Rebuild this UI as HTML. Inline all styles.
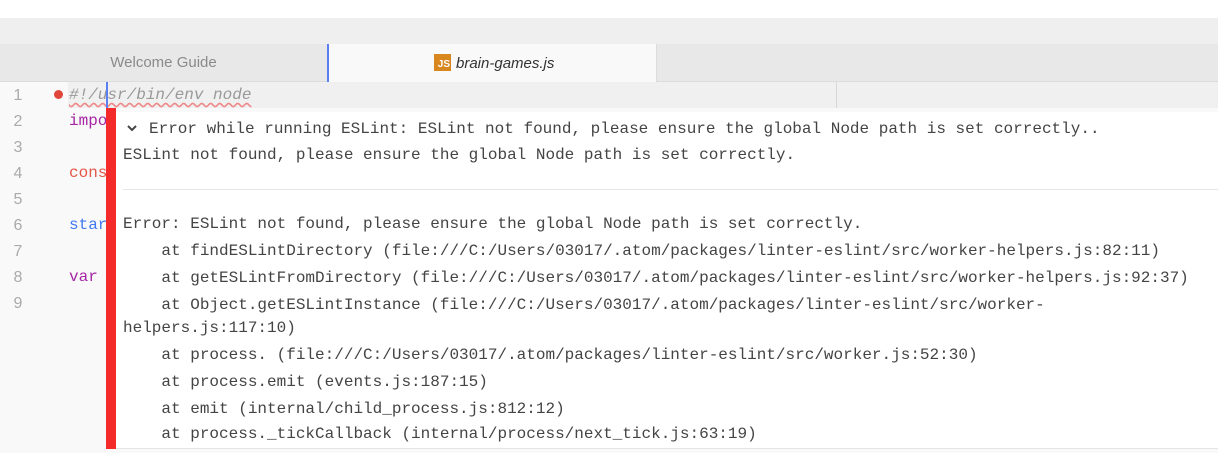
<!DOCTYPE html>
<html><head><meta charset="utf-8"><style>
*{margin:0;padding:0;box-sizing:border-box}
body{width:1218px;height:453px;overflow:hidden;background:#f9f9f9;position:relative;font-family:"Liberation Sans",sans-serif}
.abs{position:absolute}
.mono{font-family:"Liberation Mono",monospace;font-size:16px;white-space:pre}
.ln{position:absolute;left:0;width:36px;text-align:center;color:#aaa;font-size:16px;font-family:"Liberation Sans",sans-serif}
.p{position:absolute;left:123px;color:#444;font-family:"Liberation Mono",monospace;font-size:16px;white-space:pre;letter-spacing:0}
</style></head><body>
<div class="abs" style="left:0;top:0;width:1218px;height:18px;background:#fff"></div>
<div class="abs" style="left:0;top:18px;width:1218px;height:26px;background:#efefef"></div>
<div class="abs" style="left:0;top:44px;width:1218px;height:38px;background:#e8e8e8;border-bottom:1px solid #dcdcdc"></div>
<div class="abs" style="left:0;top:44px;width:327px;height:38px;color:#8a8a8a;font-size:15px;text-align:center;line-height:38px">Welcome Guide</div>
<div class="abs" style="left:327px;top:44px;width:2px;height:38px;background:#5a7ff0"></div>
<div class="abs" style="left:329px;top:44px;width:328px;height:39px;background:#f9f9f9;border-right:1px solid #dcdcdc"></div>
<div class="abs" style="left:434px;top:54px;width:17px;height:17px;background:#d8861e;color:#fff;font-size:10px;font-weight:bold;line-height:22px;text-align:right;padding-right:1px">JS</div>
<div class="abs" style="left:456px;top:54px;font-size:15px;font-style:italic;color:#333;line-height:20px">brain-games.js</div>
<div class="abs" style="left:68px;top:82px;width:1150px;height:26px;background:#f0f0f0"></div>
<div class="abs" style="left:836px;top:82px;width:1px;height:26px;background:#d8d8d8"></div>
<div class="ln" style="top:87px">1</div>
<div class="ln" style="top:113px">2</div>
<div class="ln" style="top:139px">3</div>
<div class="ln" style="top:165px">4</div>
<div class="ln" style="top:191px">5</div>
<div class="ln" style="top:217px">6</div>
<div class="ln" style="top:243px">7</div>
<div class="ln" style="top:269px">8</div>
<div class="ln" style="top:295px">9</div>
<div class="abs" style="left:54px;top:90px;width:9px;height:9px;border-radius:50%;background:#e0463a"></div>
<div class="abs mono" style="left:69px;top:86px;color:#999;font-style:italic;text-decoration:underline wavy #e88;text-underline-offset:3px">#!/usr/bin/env node</div>
<div class="abs mono" style="left:69px;top:112px;color:#a626a4">impo</div>
<div class="abs mono" style="left:69px;top:164px;color:#e45649">cons</div>
<div class="abs mono" style="left:69px;top:216px;color:#4078f2">star</div>
<div class="abs mono" style="left:69px;top:268px;color:#a626a4">var</div>
<div class="abs" style="left:106px;top:82px;width:2px;height:26px;background:#5a7ff0"></div>
<div class="abs" style="left:106px;top:108px;width:10px;height:341px;background:#f52a2a"></div>
<div class="abs" style="left:116px;top:112px;width:1102px;height:337px;background:#fff;border-bottom:1px solid #e4e4e4"></div>
<div class="abs" style="left:123px;top:189px;width:1095px;height:1px;background:#e6e6e6"></div>
<svg class="abs" style="left:126px;top:124px" width="12" height="9" viewBox="0 0 12 9"><path d="M2 2 L6 6 L10 2" stroke="#444" stroke-width="2" fill="none"/></svg>
<div class="p" style="left:149px;top:120px">Error while running ESLint: ESLint not found, please ensure the global Node path is set correctly..</div>
<div class="p" style="top:146px">ESLint not found, please ensure the global Node path is set correctly.</div>
<div class="p" style="top:215px">Error: ESLint not found, please ensure the global Node path is set correctly.</div>
<div class="p" style="top:242px">    at findESLintDirectory (file:///C:/Users/03017/.atom/packages/linter-eslint/src/worker-helpers.js:82:11)</div>
<div class="p" style="top:269px">    at getESLintFromDirectory (file:///C:/Users/03017/.atom/packages/linter-eslint/src/worker-helpers.js:92:37)</div>
<div class="p" style="top:296px">    at Object.getESLintInstance (file:///C:/Users/03017/.atom/packages/linter-eslint/src/worker-</div>
<div class="p" style="top:319px">helpers.js:117:10)</div>
<div class="p" style="top:346px">    at process. (file:///C:/Users/03017/.atom/packages/linter-eslint/src/worker.js:52:30)</div>
<div class="p" style="top:373px">    at process.emit (events.js:187:15)</div>
<div class="p" style="top:400px">    at emit (internal/child_process.js:812:12)</div>
<div class="p" style="top:425px">    at process._tickCallback (internal/process/next_tick.js:63:19)</div>
</body></html>
